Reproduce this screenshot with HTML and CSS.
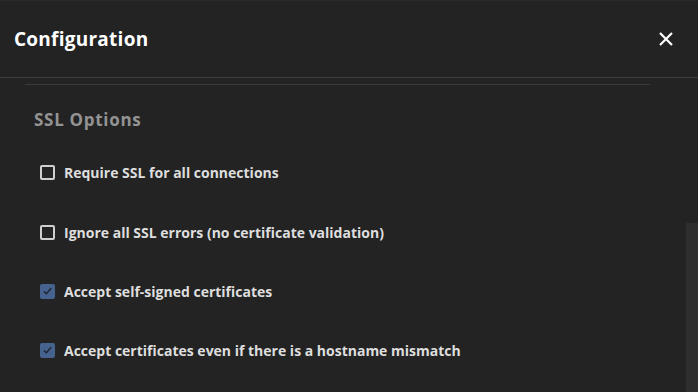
FILE: index.html
```html
<!DOCTYPE html>
<html lang="en">
<head>
    <meta charset="UTF-8">
    <meta name="viewport" content="width=device-width, initial-scale=1.0">
    <title>Configuration</title>
    <link rel="stylesheet" href="styles.css">
</head>
<body>
    <div class="dialog">
        <div class="header">
            <div class="title">Configuration</div>
            <button class="close" aria-label="Close">
                <svg width="16" height="16" viewBox="0 0 16 16">
                    <path d="M2 2 L14 14 M14 2 L2 14" stroke="#fff" stroke-width="2.2" fill="none"/>
                </svg>
            </button>
        </div>

        <div class="body">
            <div class="content">
                <div class="divider"></div>
                <div class="section-title">SSL Options</div>

                <label class="option">
                    <span class="box"></span>
                    <span>Require SSL for all connections</span>
                </label>
                <label class="option">
                    <span class="box"></span>
                    <span>Ignore all SSL errors (no certificate validation)</span>
                </label>
                <label class="option">
                    <span class="box checked">
                        <svg width="12" height="12" viewBox="0 0 12 12">
                            <path d="M2 6.5 L4.8 9 L10 3" stroke="#1e2430" stroke-width="1.6" fill="none"/>
                        </svg>
                    </span>
                    <span>Accept self-signed certificates</span>
                </label>
                <label class="option">
                    <span class="box checked">
                        <svg width="12" height="12" viewBox="0 0 12 12">
                            <path d="M2 6.5 L4.8 9 L10 3" stroke="#1e2430" stroke-width="1.6" fill="none"/>
                        </svg>
                    </span>
                    <span>Accept certificates even if there is a hostname mismatch</span>
                </label>
            </div>
            <div class="scrollbar">
                <div class="thumb"></div>
            </div>
        </div>
    </div>
</body>
</html>
```

FILE: styles.css
```css
body {
    margin: 0;
    padding: 0;
    background-color: #232323;
    color: #e2e2e2;
    font-family: "Open Sans", "Liberation Sans", sans-serif;
    height: 100vh;
    overflow: hidden;
}

.dialog {
    height: 100vh;
    display: flex;
    flex-direction: column;
    background-color: #232323;
}

.header {
    height: 78px;
    display: flex;
    align-items: center;
    justify-content: space-between;
    padding: 0 24px 0 14px;
    border-bottom: 1px solid #3e3e3e;
    border-top: 1px solid #2a2a2a;
    box-sizing: border-box;
    flex-shrink: 0;
}

.title {
    font-size: 19px;
    font-weight: bold;
    color: #ffffff;
    letter-spacing: 0.25px;
}

.close {
    background: none;
    border: none;
    padding: 0;
    width: 16px;
    height: 16px;
    cursor: pointer;
}

.body {
    flex-grow: 1;
    min-height: 0;
    overflow: hidden;
    display: flex;
}

.content {
    flex-grow: 1;
    padding: 6px 36px 0 25px;
}

.divider {
    height: 1px;
    background-color: #3a3a3a;
}

.section-title {
    font-size: 17px;
    font-weight: bold;
    color: #939393;
    margin: 24px 0 0 9px;
    height: 22px;
    line-height: 22px;
    letter-spacing: 0.7px;
}

.option {
    display: flex;
    align-items: center;
    height: 20px;
    margin: 31px 0 40px 15px;
    font-size: 14px;
    font-weight: bold;
    color: #dedede;
}

.option + .option {
    margin-top: 0;
}

.option + .option + .option {
    margin-top: -1px;
}

.box {
    width: 15px;
    height: 15px;
    box-sizing: border-box;
    border: 2px solid #cfcfcf;
    border-radius: 2px;
    margin-right: 9px;
    display: flex;
    align-items: center;
    justify-content: center;
}

.box.checked {
    background-color: #45638e;
    border-color: #45638e;
}

.scrollbar {
    width: 12px;
    display: flex;
    flex-direction: column;
    justify-content: flex-end;
}

.thumb {
    height: 169px;
    background-color: #2e2e2e;
}
```
